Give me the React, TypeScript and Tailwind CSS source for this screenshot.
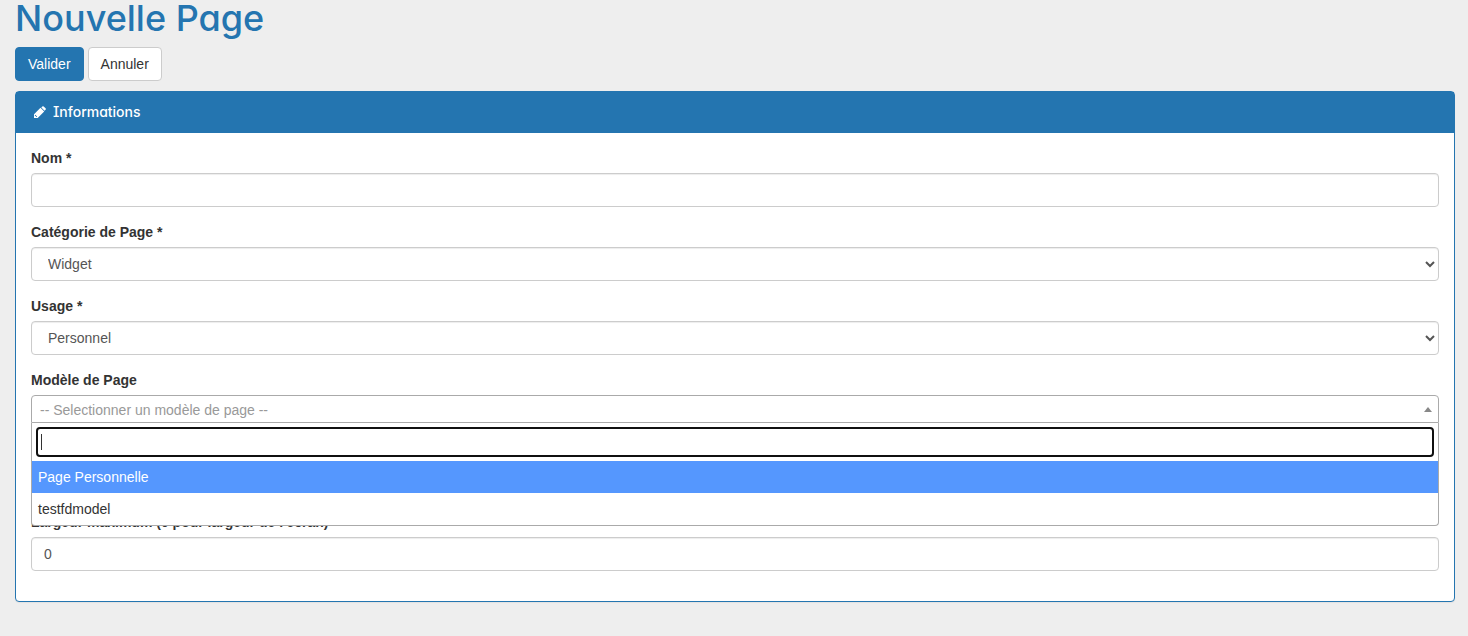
import { useState } from "react";
import type { ReactNode } from "react";

const categories = ["Widget", "Page"];
const usages = ["Personnel", "Collectif"];
const models = ["Page Personnelle", "testfdmodel"];

const controlClass =
  "block h-[34px] w-full rounded border border-[#ccc] bg-white px-3 text-[#555] shadow-[inset_0_1px_1px_rgba(0,0,0,0.075)] outline-none";

function Field({ id, label, children }: { id: string; label: string; children: ReactNode }) {
  return (
    <div className="mb-[15px]">
      <label htmlFor={id} className="mb-[5px] block font-bold">
        {label}
      </label>
      {children}
    </div>
  );
}

function PencilIcon() {
  return (
    <svg viewBox="0 0 1536 1536" className="size-3" fill="currentColor" aria-hidden="true">
      <path d="M340 1420l60-60-225-225-60 60v97h128v128zM832 230l474 474-832 832H0v-474zM1515 384q0 53-37 90l-126 126-416-416 126-125q36-38 90-38 53 0 91 38l235 234q37 39 37 91z" />
    </svg>
  );
}

function ModelPicker() {
  const [active, setActive] = useState(0);
  const [search, setSearch] = useState("");

  return (
    <div className="relative">
      <button
        type="button"
        id="model"
        aria-haspopup="listbox"
        aria-expanded="true"
        className="flex h-7 w-full items-center justify-between rounded-t border border-[#aaa] bg-white pt-[2px] pr-[6px] pl-2 text-left text-[#999]"
      >
        -- Selectionner un modèle de page --
        <svg viewBox="0 0 8 6" className="h-[6px] w-2" fill="#888" aria-hidden="true">
          <path d="M0 5l4-5 4 5z" />
        </svg>
      </button>

      <div className="absolute inset-x-0 top-full z-10 rounded-b border border-t-0 border-[#aaa] bg-white">
        <div className="relative p-1">
          <input
            type="search"
            aria-label="Rechercher"
            value={search}
            onChange={(e) => setSearch(e.target.value)}
            className="block h-[30px] w-full rounded border-2 border-[#101010] bg-white px-1 outline-none"
          />
          {search === "" && <span className="pointer-events-none absolute top-[11px] left-[9px] h-4 w-px bg-[#333]" />}
        </div>
        <ul role="listbox" aria-labelledby="model">
          {models.map((model, i) => (
            <li
              key={model}
              role="option"
              aria-selected={i === active}
              onMouseEnter={() => setActive(i)}
              className={`p-[6px] ${i === active ? "bg-[#5597fe] text-white" : ""}`}
            >
              {model}
            </li>
          ))}
        </ul>
      </div>
    </div>
  );
}

export default function App() {
  return (
    <div className="min-h-screen bg-[#eee] pr-[13px] pl-[15px] font-['Liberation_Sans',Arial,sans-serif] text-sm/5 text-[#333]">
      <h1 className="pb-[11px] font-[Inter,sans-serif] text-4xl/9 font-medium text-[#2475b0] [font-feature-settings:'cv11']">
        Nouvelle Page
      </h1>

      <form onSubmit={(e) => e.preventDefault()}>
        <div className="mb-[10px] flex gap-1">
          <button type="submit" className="rounded border border-[#2475b0] bg-[#2475b0] px-3 py-[6px] text-white">
            Valider
          </button>
          <button type="button" className="rounded border border-[#ccc] bg-white px-3 py-[6px]">
            Annuler
          </button>
        </div>

        <section className="rounded border border-[#2475b0] bg-white shadow-[0_1px_1px_rgba(0,0,0,0.05)]">
          <h2 className="flex h-[41px] items-center gap-[7px] bg-[#2475b0] px-[18px] pb-[2px] font-[Inter,sans-serif] font-medium text-white [font-feature-settings:'cv11','cv08']">
            <PencilIcon />
            Informations
          </h2>

          <div className="p-[15px]">
            <Field id="name" label="Nom *">
              <input id="name" type="text" className={controlClass} />
            </Field>

            <Field id="category" label="Catégorie de Page *">
              <select id="category" className={controlClass}>
                {categories.map((c) => (
                  <option key={c}>{c}</option>
                ))}
              </select>
            </Field>

            <Field id="usage" label="Usage *">
              <select id="usage" className={controlClass}>
                {usages.map((u) => (
                  <option key={u}>{u}</option>
                ))}
              </select>
            </Field>

            <Field id="model" label="Modèle de Page">
              <ModelPicker />
            </Field>

            <div className="pt-[74px]">
              <Field id="max-width" label="Largeur maximum (0 pour largeur de l'écran)">
                <input id="max-width" type="text" defaultValue="0" className={controlClass} />
              </Field>
            </div>
          </div>
        </section>
      </form>
    </div>
  );
}
